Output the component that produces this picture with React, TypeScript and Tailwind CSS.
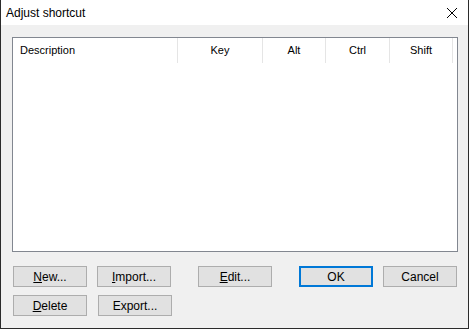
import React from "react";

function Btn({ children, primary, className = "" }: { children: React.ReactNode; primary?: boolean; className?: string }) {
  return (
    <div
      className={
        "w-[74px] h-[21px] flex items-center justify-center bg-[#e1e1e1] text-[12px] text-black leading-none " +
        (primary ? "border-2 border-[#0078d7] " : "border border-[#adadad] ") +
        className
      }
    >
      {children}
    </div>
  );
}

export default function App() {
  const cols = [
    { label: "Key", w: "w-[85px]" },
    { label: "Alt", w: "w-[63px]" },
    { label: "Ctrl", w: "w-[64px]" },
    { label: "Shift", w: "w-[63px]" },
  ];
  return (
    <div
      className="w-[469px] h-[329px] flex flex-col bg-[#f0f0f0] border-l border-r border-b border-[#2b2b2b] overflow-hidden"
      style={{ fontFamily: '"Liberation Sans", Arial, sans-serif' }}
    >
      <div className="h-[25px] bg-white flex items-center justify-between shrink-0">
        <span className="pl-[5px] text-[12px] text-black">Adjust shortcut</span>
        <svg width="12" height="12" viewBox="0 0 12 12" className="mr-[10px]">
          <path d="M1 1 L11 11 M11 1 L1 11" stroke="#000" strokeWidth="1" />
        </svg>
      </div>
      <div className="flex-1 flex flex-col pl-[11px]">
        <div className="mt-[12px] w-[446px] h-[215px] border border-[#828790] bg-white flex flex-col">
          <div className="h-[25px] flex text-[11px] text-black">
            <div className="w-[165px] h-full flex items-center pl-[7px] border-r border-[#e5e5e5]">Description</div>
            {cols.map((c) => (
              <div key={c.label} className={c.w + " h-full flex items-center justify-center border-r border-[#e5e5e5]"}>
                {c.label}
              </div>
            ))}
          </div>
        </div>
        <div className="mt-[14px] flex pl-[1px]">
          <div className="flex flex-col gap-[8px]">
            <div className="flex gap-[10px]">
              <Btn><span><u>N</u>ew...</span></Btn>
              <Btn><span><u>I</u>mport...</span></Btn>
            </div>
            <div className="flex gap-[10px]">
              <Btn><span><u>D</u>elete</span></Btn>
              <Btn className="ml-[1px]"><span>Export...</span></Btn>
            </div>
          </div>
          <Btn className="ml-[26px]"><span><u>E</u>dit...</span></Btn>
          <Btn primary className="ml-[27px]">OK</Btn>
          <Btn className="ml-[10px]">Cancel</Btn>
        </div>
      </div>
    </div>
  );
}
